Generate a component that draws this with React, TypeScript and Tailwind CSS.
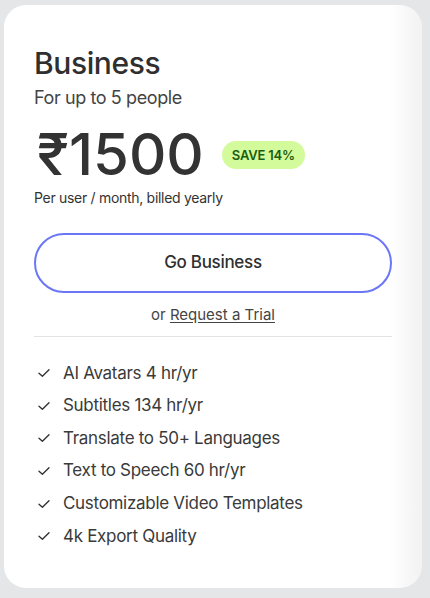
import React from 'react';

const features = [
  'AI Avatars 4 hr/yr',
  'Subtitles 134 hr/yr',
  'Translate to 50+ Languages',
  'Text to Speech 60 hr/yr',
  'Customizable Video Templates',
  '4k Export Quality',
];

const Check = () => (
  <svg width="14" height="14" viewBox="0 0 14 14" fill="none" className="shrink-0">
    <path d="M2 7.2 L5.4 10.2 L12 3.8" stroke="#333" strokeWidth="1.4" strokeLinecap="round" strokeLinejoin="round" />
  </svg>
);

const App: React.FC = () => {
  return (
    <div className="min-h-screen w-[430px] h-[598px] bg-[#e5e6e8] pt-[5px] pl-[4px]" style={{ fontFamily: 'Inter, "Noto Sans", sans-serif' }}>
      <div className="w-[418px] h-[583px] rounded-[22px] bg-gradient-to-r from-white from-[92%] to-[#f2f2f3] px-[30px] pt-[40px] text-[#333]">
        {/* Title */}
        <h1 className="text-[30px] leading-[36px] font-medium tracking-[-0.4px] text-[#2f2f2f]">Business</h1>
        <p className="text-[18px] leading-[24px] tracking-[-0.4px] text-[#444] mt-[5px]">For up to 5 people</p>

        {/* Price */}
        <div className="flex items-center mt-[14px] h-[60px]">
          <span className="ml-[3px] text-[58px] leading-[60px] font-medium tracking-[0px] text-[#333]">₹1500</span>
          <span className="ml-[18px] mt-[1px] rounded-full bg-[#d3fb9c] px-[10px] py-[5px] text-[13px] leading-[18px] font-semibold text-[#1b5e0c] tracking-[-0.2px]">
            SAVE 14%
          </span>
        </div>
        <p className="text-[14px] leading-[18px] tracking-[-0.3px] text-[#333] mt-[5px]">Per user / month, billed yearly</p>

        {/* CTA */}
        <button className="mt-[26px] w-[358px] h-[60px] rounded-full border-2 border-[#6a76f5] bg-white text-[17px] font-medium tracking-[-0.3px] text-[#2f2f2f]">
          Go Business
        </button>
        <p className="text-center text-[15px] leading-[20px] text-[#444] mt-[12px] w-[358px]">
          or <span className="underline underline-offset-2">Request a Trial</span>
        </p>
        <div className="w-[358px] h-px bg-[#e3e3e3] mt-[11px]" />

        {/* Features */}
        <ul className="mt-[20px] flex flex-col">
          {features.map((f) => (
            <li key={f} className="flex items-center h-[32.6px] gap-[12px] pl-[3px]">
              <Check />
              <span className="text-[17px] tracking-[-0.3px] text-[#3a3a3a]">{f}</span>
            </li>
          ))}
        </ul>
      </div>
    </div>
  );
};

export default App;
